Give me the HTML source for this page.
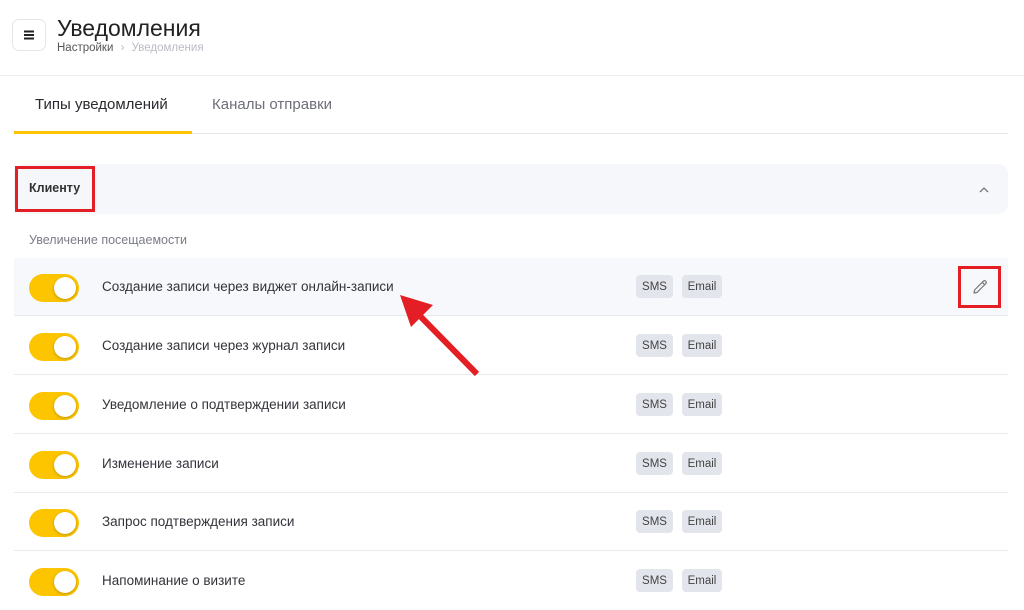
<!DOCTYPE html>
<html><head><meta charset="utf-8"><style>
*{box-sizing:border-box;margin:0;padding:0}
body{width:1024px;height:608px;overflow:hidden;background:#fff;font-family:"Liberation Sans","DejaVu Sans",sans-serif;color:#2b2b33;position:relative}
.abs{position:absolute}
.menu{left:12px;top:19px;width:34px;height:32px;border:1px solid #e3e5ea;border-radius:7px;display:flex;align-items:center;justify-content:center}
.menu i{display:block;width:10px;height:2px;background:#222;box-shadow:0 -3.5px 0 #222,0 3.5px 0 #222}
.row{position:absolute;left:14px;width:994px;height:58px;border-bottom:1px solid #e8eaef}
.tg{position:absolute;left:15px;top:16px;width:50px;height:28px;border-radius:14px;background:#fdc500}
.tg::after{content:"";position:absolute;right:3px;top:3px;width:22px;height:22px;border-radius:50%;background:#fff;box-shadow:0 1px 3px rgba(0,0,0,.25)}
.lbl{position:absolute;left:88px;top:21px;font-size:13.5px;color:#33333b}
.tag{position:absolute;top:17px;height:23px;font-size:11.5px;color:#444;background:#e3e5ec;border-radius:4px;display:flex;align-items:center;justify-content:center}
.s{left:622px;width:37px}.e{left:668px;width:40px}
.red{position:absolute;border:3px solid #e31e24}
</style></head><body>
<div class="abs menu"><i></i></div>
<div class="abs" style="left:57px;top:15px;font-size:23px;color:#222">Уведомления</div>
<div class="abs" style="left:57px;top:42px;font-size:11.5px;color:#555">Настройки <span style="color:#bbb;margin:0 4px">›</span> <span style="color:#b9bcc4">Уведомления</span></div>
<div class="abs" style="left:0;top:75px;width:1024px;height:1px;background:#eceef2"></div>
<div class="abs" style="left:35px;top:96px;font-size:15px;color:#2a2a30">Типы уведомлений</div>
<div class="abs" style="left:212px;top:96px;font-size:15px;color:#6d6f78">Каналы отправки</div>
<div class="abs" style="left:14px;top:133px;width:994px;height:1px;background:#e5e7ec"></div>
<div class="abs" style="left:14px;top:131px;width:178px;height:3px;background:#fdc500"></div>
<div class="abs" style="left:14px;top:164px;width:994px;height:50px;background:#f6f7fa;border-radius:10px"></div>
<div class="abs" style="left:29px;top:181px;font-size:12.5px;font-weight:bold;color:#333">Клиенту</div>
<div class="red" style="left:15px;top:166px;width:80px;height:46px"></div>
<svg class="abs" style="left:978px;top:185px" width="12" height="10"><path d="M2 7 L6 3 L10 7" fill="none" stroke="#777" stroke-width="1.3"/></svg>
<div class="abs" style="left:29px;top:233px;font-size:12.5px;color:#7a7d86">Увеличение посещаемости</div>
<div class="row" style="top:258px;background:#f7f8fb"><div class="tg"></div><div class="lbl">Создание записи через виджет онлайн-записи</div><div class="tag s">SMS</div><div class="tag e">Email</div></div>
<div class="row" style="top:317px"><div class="tg"></div><div class="lbl">Создание записи через журнал записи</div><div class="tag s">SMS</div><div class="tag e">Email</div></div>
<div class="row" style="top:376px"><div class="tg"></div><div class="lbl">Уведомление о подтверждении записи</div><div class="tag s">SMS</div><div class="tag e">Email</div></div>
<div class="row" style="top:435px"><div class="tg"></div><div class="lbl">Изменение записи</div><div class="tag s">SMS</div><div class="tag e">Email</div></div>
<div class="row" style="top:493px"><div class="tg"></div><div class="lbl">Запрос подтверждения записи</div><div class="tag s">SMS</div><div class="tag e">Email</div></div>
<div class="row" style="top:552px;border:none"><div class="tg"></div><div class="lbl">Напоминание о визите</div><div class="tag s">SMS</div><div class="tag e">Email</div></div>
<div class="red" style="left:958px;top:266px;width:43px;height:42px"></div>
<svg class="abs" style="left:971px;top:278px" width="18" height="18" viewBox="0 0 18 18"><path d="M3 15 L3.6 12 L12.5 3.1 Q13.5 2.2 14.5 3.1 L14.9 3.5 Q15.8 4.5 14.9 5.5 L6 14.4 Z M11.3 4.3 L13.7 6.7" fill="none" stroke="#777" stroke-width="1.2" stroke-linejoin="round"/></svg>
<svg class="abs" style="left:0;top:0" width="1024" height="608"><line x1="477" y1="374" x2="420" y2="316" stroke="#e31e24" stroke-width="6"/><polygon points="400,295 433,305 411,327" fill="#e31e24"/></svg>
</body></html>
